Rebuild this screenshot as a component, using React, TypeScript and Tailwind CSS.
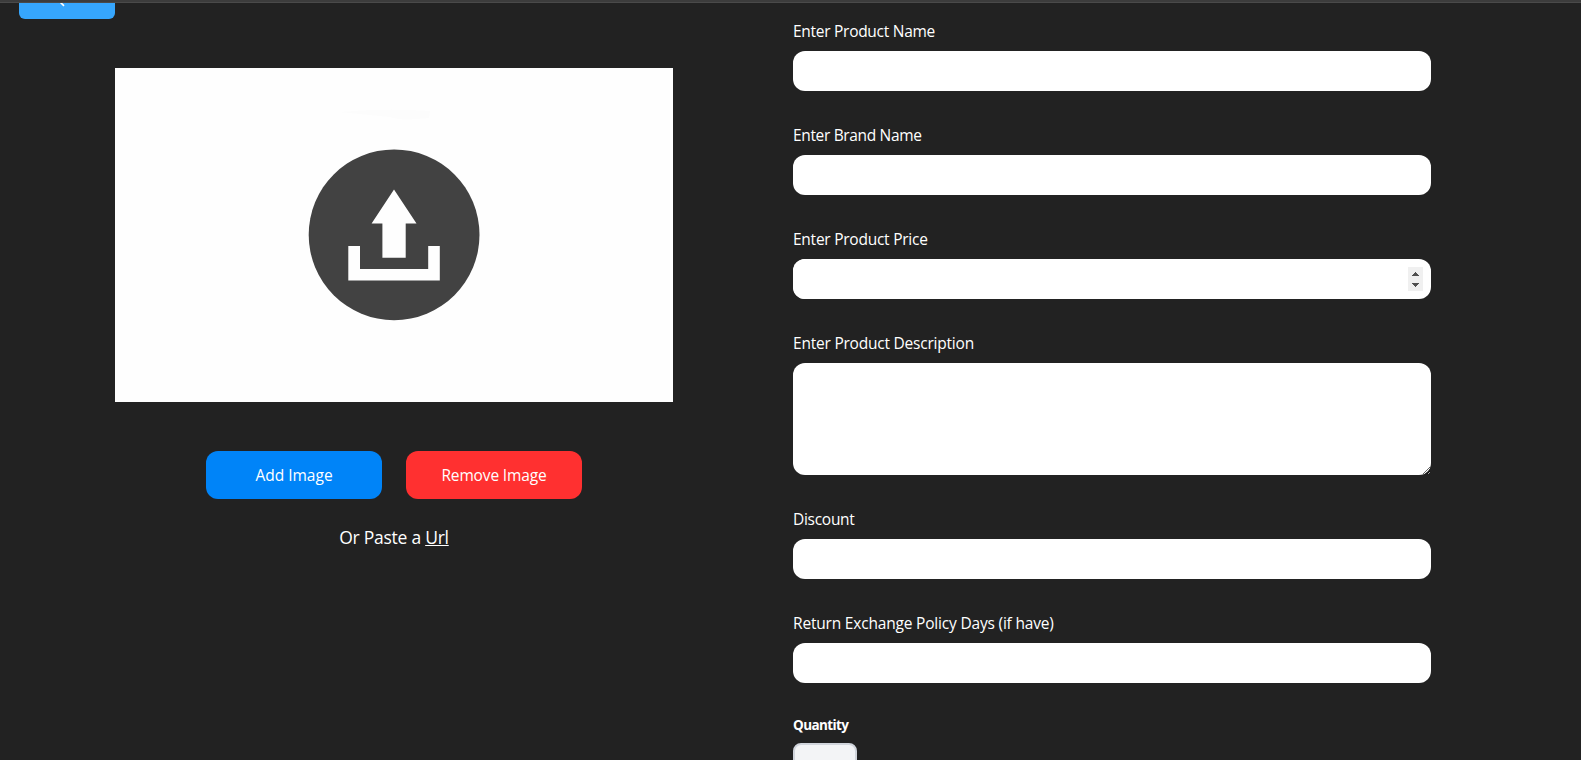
import React from "react";

const fieldBox = "w-full rounded-xl bg-white px-4 text-base text-black outline-none";

function Field({
  label,
  tracking = "tracking-[-0.28px]",
  children,
}: {
  label: string;
  tracking?: string;
  children: React.ReactNode;
}) {
  return (
    <label className="flex flex-col gap-2">
      <span className={`block h-6 whitespace-nowrap text-[15.5px] leading-6 ${tracking}`}>{label}</span>
      {children}
    </label>
  );
}

function Spinner() {
  return (
    <span className="flex h-6 w-[15px] flex-col items-center justify-center bg-[#f0f0f0]">
      <svg width="15" height="24" viewBox="0 0 15 24" fill="#505050" shapeRendering="crispEdges">
        <path d="M7 5h1v1h1v1h1v1h1v1H4V8h1V7h1V6h1z" />
        <path d="M4 16h7v1h-1v1H9v1H8v1H7v-1H6v-1H5v-1H4z" />
      </svg>
    </span>
  );
}

function UploadPreview() {
  return (
    <div className="flex h-[334px] w-[558px] justify-center bg-[#fefefe]">
      <svg width="558" height="334" viewBox="115 68 558 334">
        <path d="M340 112 Q385 108 430 111 L429 118 Q400 121 390 117 Z" fill="#fcfcfc" />
        <circle cx="394.1" cy="234.8" r="85.4" fill="#424242" />
        <path d="M394 189.5L416.5 223.5H405.7V257.7H382.4V223.5H371.6Z" fill="#fefefe" />
        <path d="M348.3 246H360V269H428.2V246H439.8V280.6H348.3Z" fill="#fefefe" />
      </svg>
    </div>
  );
}

export default function App() {
  return (
    <div className="flex h-[760px] w-[1581px] flex-col overflow-hidden bg-[#222222] font-['Open_Sans','Noto_Sans',sans-serif] text-white">
      <div className="h-[3px] shrink-0 border-b border-[#4a4a4a] bg-[#3c3c3c]" />
      <div className="flex min-h-0 flex-1">
        <section className="flex w-[793px] flex-col pl-[19px]">
          <button className="flex h-4 w-24 justify-center overflow-hidden rounded-b-md bg-[#36a6fd]">
            <svg width="96" height="16" viewBox="0 0 96 16" fill="none" stroke="white" strokeWidth="1.7">
              <path d="M41.5 -.5L45 2.8" />
            </svg>
          </button>
          <div className="ml-24 mt-[49px] flex w-[558px] flex-col items-center">
            <UploadPreview />
            <div className="mt-[49px] flex gap-6">
              <button className="h-12 w-44 rounded-xl bg-[#0084f8] text-[15.5px] leading-6">Add Image</button>
              <button className="h-12 w-44 rounded-xl bg-[#ff3030] text-[15.5px] leading-6 tracking-[-0.14px]">Remove Image</button>
            </div>
            <p className="mt-6 text-[17.5px] leading-7 tracking-[-0.26px]">
              Or Paste a <span className="underline">Url</span>
            </p>
          </div>
        </section>
        <form className="flex w-[638px] flex-col gap-8 pt-4">
          <Field label="Enter Product Name">
            <input className={`${fieldBox} h-10`} />
          </Field>
          <Field label="Enter Brand Name" tracking="tracking-[-0.34px]">
            <input className={`${fieldBox} h-10`} />
          </Field>
          <Field label="Enter Product Price" tracking="tracking-[-0.25px]">
            <span className="flex h-10 w-full items-center rounded-xl bg-white pr-2">
              <input className="h-10 min-w-0 flex-1 rounded-xl bg-white px-4 text-black outline-none" />
              <Spinner />
            </span>
          </Field>
          <Field label="Enter Product Description" tracking="tracking-[-0.22px]">
            <textarea className={`${fieldBox} h-28 shrink-0 resize`} />
          </Field>
          <Field label="Discount">
            <input className={`${fieldBox} h-10`} />
          </Field>
          <Field label="Return Exchange Policy Days (if have)" tracking="tracking-[-0.19px]">
            <input className={`${fieldBox} h-10`} />
          </Field>
          <label className="flex flex-col gap-2">
            <span className="h-5 text-[13.5px] font-bold leading-5 tracking-[-0.6px]">Quantity</span>
            <input className="h-10 w-16 shrink-0 rounded-lg border-2 border-gray-300 bg-gray-100" />
          </label>
        </form>
      </div>
    </div>
  );
}
